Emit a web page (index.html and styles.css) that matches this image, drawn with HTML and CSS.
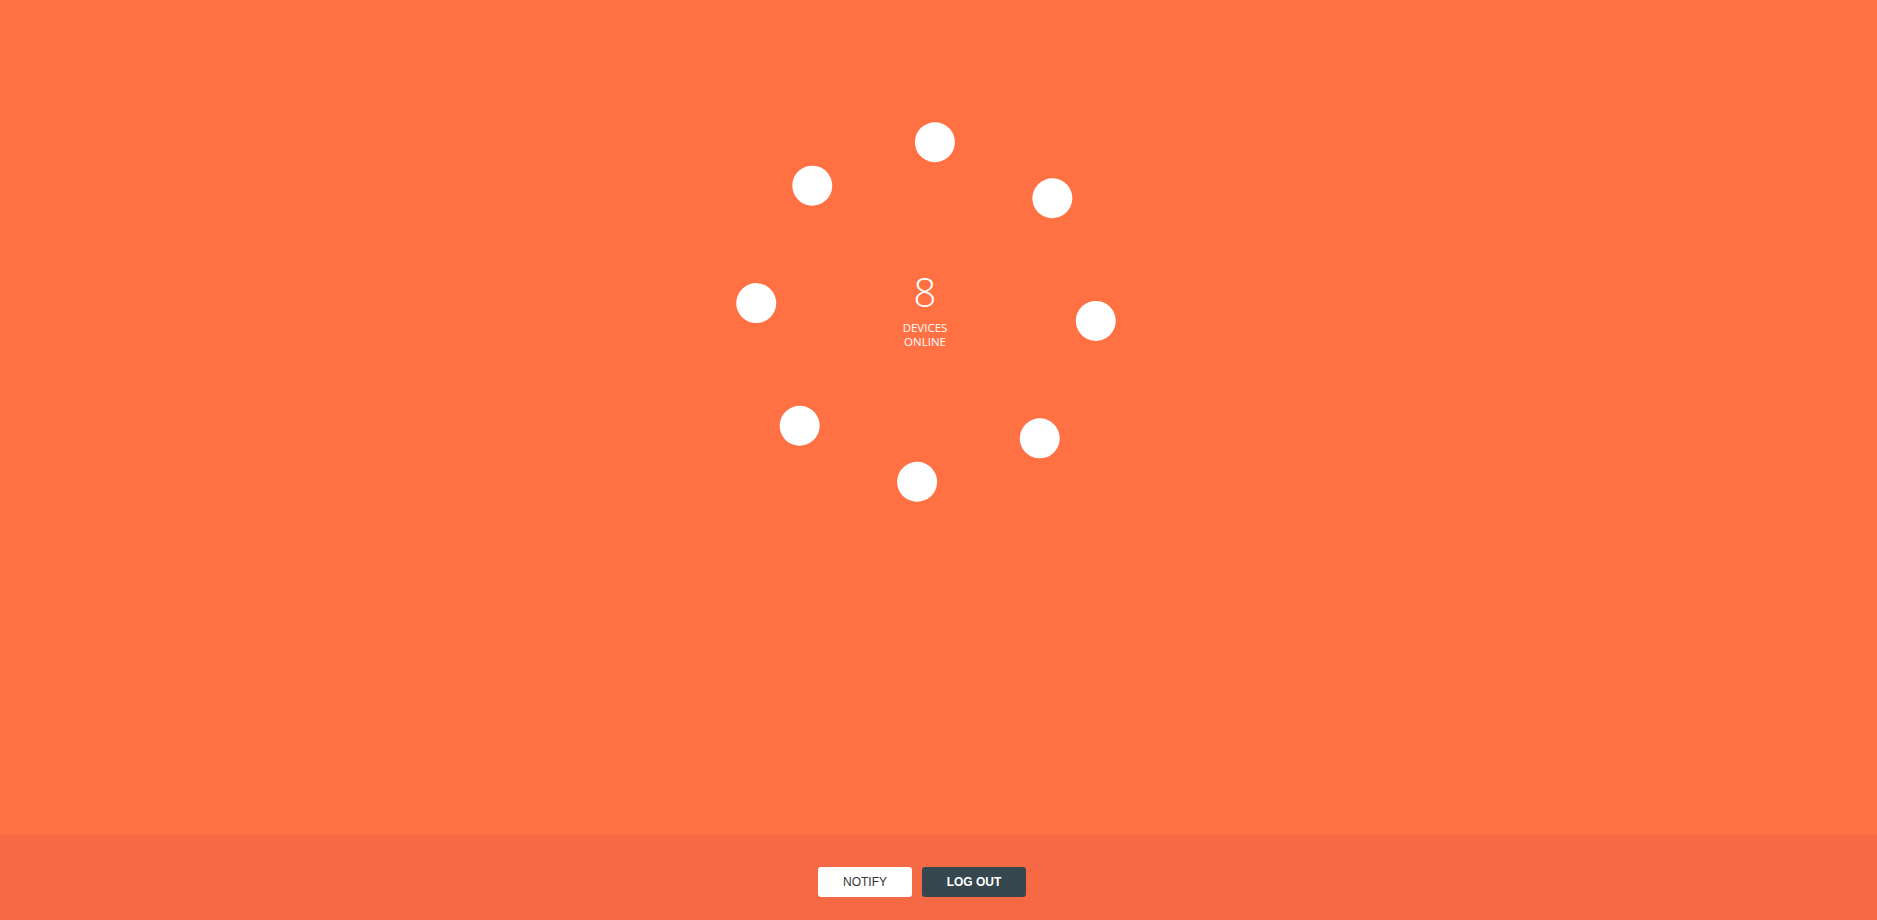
FILE: index.html
```html
<!DOCTYPE html>
<html lang="en">
<head>
<meta charset="utf-8">
<title>Devices online</title>
<link rel="stylesheet" href="styles.css">
</head>
<body>
<div class="page">
  <main class="stage">
    <div class="ring">
      <span class="dot d0"></span>
      <span class="dot d1"></span>
      <span class="dot d2"></span>
      <span class="dot d3"></span>
      <span class="dot d4"></span>
      <span class="dot d5"></span>
      <span class="dot d6"></span>
      <span class="dot d7"></span>
      <div class="label">
        <div class="count">8</div>
        <div class="caption">DEVICES<br>ONLINE</div>
      </div>
    </div>
  </main>
  <footer class="bar">
    <button class="btn btn-light">NOTIFY</button>
    <button class="btn btn-dark">LOG OUT</button>
  </footer>
</div>
</body>
</html>
```
FILE: styles.css
```css
html, body {
  margin: 0;
  padding: 0;
  height: 100%;
}
body {
  background: #ff7043;
  font-family: "Open Sans", "Liberation Sans", sans-serif;
  color: #fff;
  overflow: hidden;
}
.page {
  display: flex;
  flex-direction: column;
  height: 920px;
}
.stage {
  flex: 1;
  display: flex;
  justify-content: center;
  align-items: flex-start;
  padding-top: 122px;
  padding-right: 25px;
  background: #ff7043;
}
.ring {
  position: relative;
  width: 380px;
  height: 380px;
}
.dot {
  position: absolute;
  left: 170px;
  top: 170px;
  width: 40px;
  height: 40px;
  border-radius: 50%;
  background: #fff;
}
.d0 { transform: rotate(3deg) translateX(170px); }
.d1 { transform: rotate(48deg) translateX(170px); }
.d2 { transform: rotate(93deg) translateX(170px); }
.d3 { transform: rotate(138deg) translateX(170px); }
.d4 { transform: rotate(183deg) translateX(170px); }
.d5 { transform: rotate(228deg) translateX(170px); }
.d6 { transform: rotate(273deg) translateX(170px); }
.d7 { transform: rotate(318deg) translateX(170px); }
.label {
  position: absolute;
  left: 0;
  right: 0;
  top: 150px;
  display: flex;
  flex-direction: column;
  align-items: center;
  text-align: center;
  padding-right: 2px;
}
.count {
  font-family: "Open Sans", sans-serif;
  font-weight: 300;
  font-size: 40px;
  line-height: 40px;
}
.caption {
  font-family: "Open Sans", sans-serif;
  font-size: 11.5px;
  line-height: 14px;
  margin-top: 9px;
}
.bar {
  height: 85px;
  background: #f56945;
  display: flex;
  justify-content: center;
  align-items: flex-start;
  gap: 10px;
  padding-top: 32px;
  padding-right: 33px;
  box-sizing: border-box;
}
.btn {
  height: 30px;
  border: 0;
  border-radius: 3px;
  font-family: "Liberation Sans", Arial, sans-serif;
  font-size: 12px;
  padding: 0;
  cursor: pointer;
}
.btn-light {
  width: 94px;
  background: #fff;
  color: #333;
}
.btn-dark {
  width: 104px;
  background: #37474f;
  color: #fff;
  font-weight: bold;
}
```
